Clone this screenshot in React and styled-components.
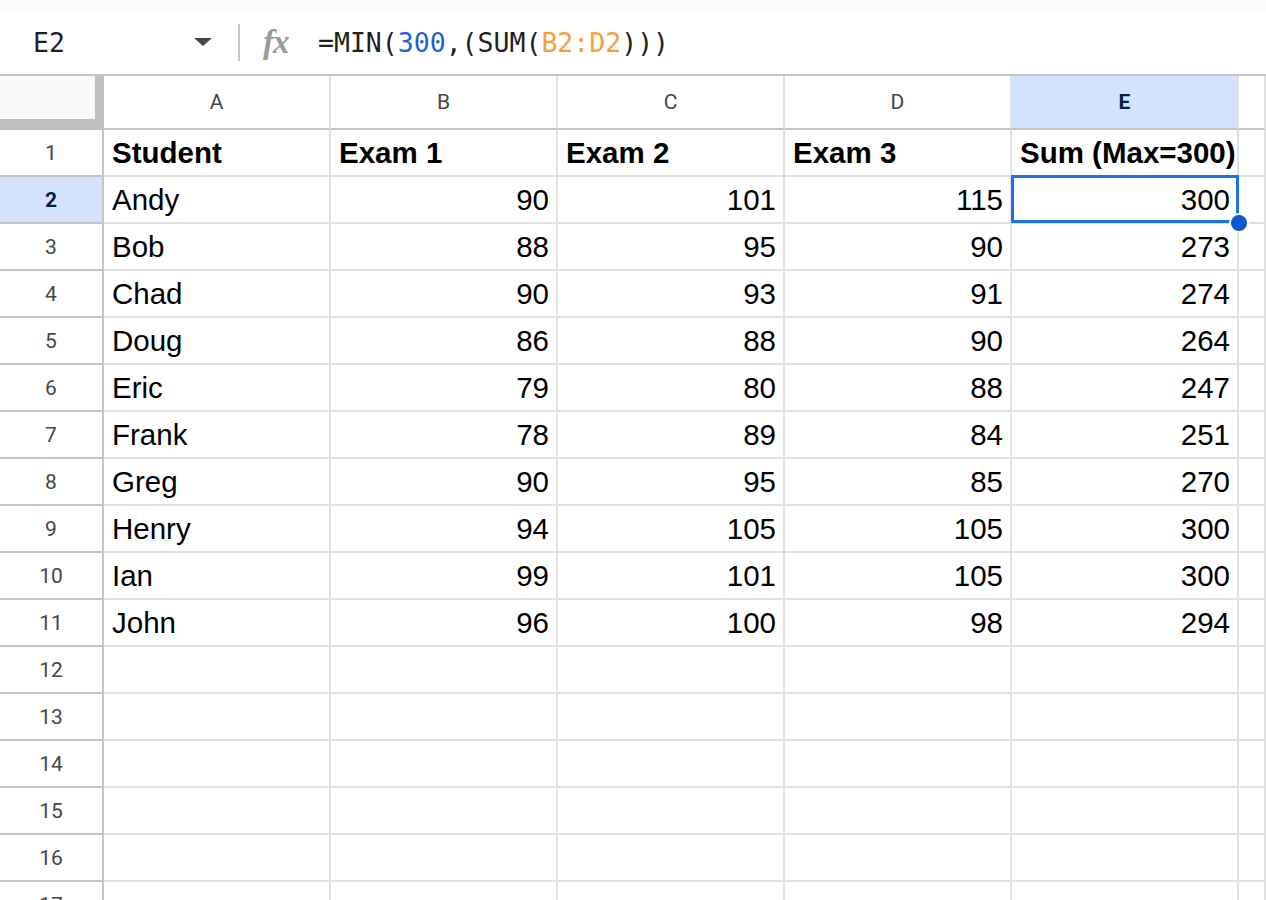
import React from "react";
import styled, { createGlobalStyle, css } from "styled-components";

const COLORS = {
  strip: "#f9fbfd",
  headerLine: "#c4c4c4",
  gridLine: "#e1e1e1",
  corner: "#f8f9fa",
  selectedBg: "#d3e3fd",
  selectedText: "#041e49",
  headerText: "#444746",
  blue: "#1a73e8",
  handle: "#0b57d0",
  number: "#1f5fd6",
  range: "#f4a13c",
};

const COLUMNS = ["A", "B", "C", "D", "E"];

const ROWS = [
  ["Student", "Exam 1", "Exam 2", "Exam 3", "Sum (Max=300)"],
  ["Andy", 90, 101, 115, 300],
  ["Bob", 88, 95, 90, 273],
  ["Chad", 90, 93, 91, 274],
  ["Doug", 86, 88, 90, 264],
  ["Eric", 79, 80, 88, 247],
  ["Frank", 78, 89, 84, 251],
  ["Greg", 90, 95, 85, 270],
  ["Henry", 94, 105, 105, 300],
  ["Ian", 99, 101, 105, 300],
  ["John", 96, 100, 98, 294],
];

const TOTAL_ROWS = 17;

const GlobalStyle = createGlobalStyle`
  html, body {
    margin: 0;
    padding: 0;
    background: #ffffff;
    overflow: hidden;
  }
  * {
    box-sizing: border-box;
  }
`;

const Page = styled.div`
  width: 1266px;
  height: 900px;
  overflow: hidden;
  background: #ffffff;
`;

const TopStrip = styled.div`
  height: 10px;
  background: ${COLORS.strip};
`;

const FormulaBar = styled.div`
  height: 64px;
  display: flex;
  align-items: center;
  font-family: "DejaVu Sans Mono", "Liberation Mono", monospace;
  font-size: 26.5px;
  color: #1f1f1f;
`;

const NameBox = styled.div`
  width: 238px;
  padding-left: 33px;
  padding-right: 26px;
  display: flex;
  align-items: center;
  justify-content: space-between;
`;

const Caret = styled.span`
  width: 0;
  height: 0;
  border-left: 9px solid transparent;
  border-right: 9px solid transparent;
  border-top: 8px solid ${COLORS.headerText};
`;

const Divider = styled.span`
  width: 2px;
  height: 37px;
  background: #c7c7c7;
`;

const FxIcon = styled.span`
  margin-left: 23px;
  width: 55px;
  font-family: "Liberation Serif", "DejaVu Serif", serif;
  font-style: italic;
  font-weight: 700;
  font-size: 33px;
  color: #9a9a9a;
  letter-spacing: -1px;
`;

const Formula = styled.span`
  white-space: pre;
`;

const Token = styled.span`
  color: ${(p) => p.$color || "#1f1f1f"};
`;

const Grid = styled.div`
  display: grid;
  grid-template-columns: 104px repeat(5, 227px) 1fr;
  grid-template-rows: 54px;
  grid-auto-rows: 47px;
  border-top: 2px solid ${COLORS.headerLine};
`;

const Corner = styled.div`
  background: ${COLORS.corner};
  border-right: 9px solid #bfbfbf;
  border-bottom: 11px solid #bfbfbf;
`;

const headerText = css`
  display: flex;
  align-items: center;
  justify-content: center;
  font-family: Roboto, "Liberation Sans", sans-serif;
  font-size: 21px;
  color: ${COLORS.headerText};
  ${(p) =>
    p.$selected &&
    css`
      background: ${COLORS.selectedBg};
      color: ${COLORS.selectedText};
      font-weight: 700;
    `}
`;

const ColHeader = styled.div`
  ${headerText}
  border-right: 2px solid ${COLORS.gridLine};
  border-bottom: 2px solid ${COLORS.headerLine};
`;

const RowHeader = styled.div`
  ${headerText}
  border-right: 2px solid ${COLORS.headerLine};
  border-bottom: 2px solid ${COLORS.headerLine};
`;

const Cell = styled.div`
  position: relative;
  display: flex;
  align-items: center;
  justify-content: ${(p) => (p.$num ? "flex-end" : "flex-start")};
  padding: 0 7px 0 8px;
  border-right: 2px solid ${COLORS.gridLine};
  border-bottom: 2px solid ${COLORS.gridLine};
  font-family: "Liberation Sans", Arial, sans-serif;
  font-size: 29.5px;
  font-weight: ${(p) => (p.$bold ? 700 : 400)};
  color: #000000;
  white-space: nowrap;
`;

const Selection = styled.div`
  position: absolute;
  left: -1px;
  top: -2px;
  width: 228px;
  height: 48px;
  border: 3px solid ${COLORS.blue};
  z-index: 2;
  pointer-events: none;
`;

const FillHandle = styled.span`
  position: absolute;
  right: -13px;
  bottom: -13px;
  width: 20px;
  height: 20px;
  border-radius: 50%;
  background: ${COLORS.handle};
  border: 2px solid #ffffff;
`;

const App = () => {
  const rows = Array.from({ length: TOTAL_ROWS }, (_, i) => ROWS[i] || []);

  return (
    <Page>
      <GlobalStyle />
      <TopStrip />
      <FormulaBar>
        <NameBox>
          <span>E2</span>
          <Caret />
        </NameBox>
        <Divider />
        <FxIcon>fx</FxIcon>
        <Formula>
          <Token>=MIN(</Token>
          <Token $color={COLORS.number}>300</Token>
          <Token>,(SUM(</Token>
          <Token $color={COLORS.range}>B2:D2</Token>
          <Token>)))</Token>
        </Formula>
      </FormulaBar>
      <Grid>
        <Corner />
        {COLUMNS.map((c) => (
          <ColHeader key={c} $selected={c === "E"}>
            {c}
          </ColHeader>
        ))}
        <ColHeader />
        {rows.map((row, r) => (
          <React.Fragment key={r}>
            <RowHeader $selected={r === 1}>{r + 1}</RowHeader>
            {COLUMNS.map((c, ci) => {
              const value = row[ci];
              return (
                <Cell
                  key={c}
                  $num={typeof value === "number"}
                  $bold={r === 0}
                >
                  {value}
                  {r === 1 && c === "E" && (
                    <Selection>
                      <FillHandle />
                    </Selection>
                  )}
                </Cell>
              );
            })}
            <Cell />
          </React.Fragment>
        ))}
      </Grid>
    </Page>
  );
};

export default App;
